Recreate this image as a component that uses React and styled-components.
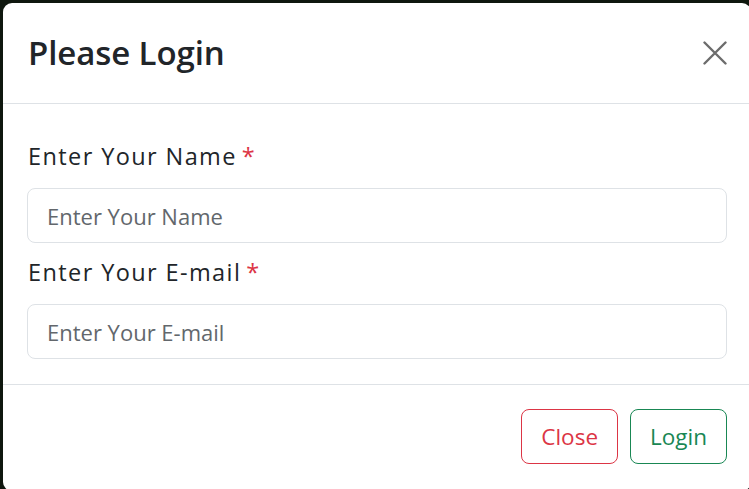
import styled, { createGlobalStyle } from 'styled-components';

const GlobalStyle = createGlobalStyle`
  html, body {
    margin: 0;
    padding: 0;
    overflow: hidden;
    background-color: #0f170e;
  }
`

const Backdrop = styled.div`
  width: 749px;
  height: 489px;
  padding: 3px 0 0 3px;
  box-sizing: border-box;
  overflow: hidden;
`

const Modal = styled.div`
  width: 748px;
  height: 488px;
  display: flex;
  flex-direction: column;
  background-color: #ffffff;
  border-radius: 9px;
  color: #212529;
`

const Header = styled.div`
  height: 100px;
  padding: 0 24px 0 25px;
  display: flex;
  align-items: center;
  justify-content: space-between;
  border-bottom: 1px solid #dee2e6;
`

const Title = styled.h1`
  margin: 0;
  font-family: "Open Sans", sans-serif;
  font-size: 33px;
  font-weight: 600;
  line-height: 1.5;
  letter-spacing: -0.1px;
`

const CloseIcon = styled.button`
  width: 24px;
  height: 24px;
  padding: 0;
  border: none;
  background: none;
  color: #6c6c6c;
  display: flex;
`

const Body = styled.div`
  flex: 1;
  padding: 36px 24px 0 24px;
  display: flex;
  flex-direction: column;
`

const Field = styled.div`
  display: flex;
  flex-direction: column;
  margin-bottom: 13px;
`

const Label = styled.label`
  font-family: "Open Sans", sans-serif;
  font-size: 23.5px;
  line-height: 32px;
  letter-spacing: 1.4px;
  margin: 0 0 16px 1px;
`

const Required = styled.span`
  color: #dc3545;
  margin-left: 5px;
`

const Input = styled.input`
  height: 55px;
  box-sizing: border-box;
  border: 1px solid #dee2e6;
  border-radius: 8px;
  padding: 0 19px;
  font-family: "Open Sans", sans-serif;
  font-size: 22px;
  color: #212529;
  outline: none;

  &::placeholder {
    color: #62676c;
  }
`

const Footer = styled.div`
  height: 107px;
  padding: 24px 24px 0 24px;
  box-sizing: border-box;
  border-top: 1px solid #dee2e6;
  display: flex;
  align-items: flex-start;
  justify-content: flex-end;
  gap: 12px;
`

const Button = styled.button`
  height: 55px;
  padding: 0 19px;
  background: #ffffff;
  border-radius: 8px;
  border: 1px solid ${props => props.$color};
  color: ${props => props.$color};
  font-family: "Open Sans", sans-serif;
  font-size: 22.5px;
`

export default function App() {
  return (
    <>
      <GlobalStyle />
      <Backdrop>
        <Modal>
          <Header>
            <Title>Please Login</Title>
            <CloseIcon aria-label="Close">
              <svg width="24" height="24" viewBox="0 0 24 24" fill="none" stroke="currentColor" strokeWidth="2.4" strokeLinecap="round">
                <path d="M1.5 1.5L22.5 22.5M22.5 1.5L1.5 22.5" />
              </svg>
            </CloseIcon>
          </Header>
          <Body>
            <Field>
              <Label>Enter Your Name<Required>*</Required></Label>
              <Input placeholder="Enter Your Name" />
            </Field>
            <Field>
              <Label>Enter Your E-mail<Required>*</Required></Label>
              <Input placeholder="Enter Your E-mail" />
            </Field>
          </Body>
          <Footer>
            <Button $color="#dc3545">Close</Button>
            <Button $color="#198754">Login</Button>
          </Footer>
        </Modal>
      </Backdrop>
    </>
  )
}
